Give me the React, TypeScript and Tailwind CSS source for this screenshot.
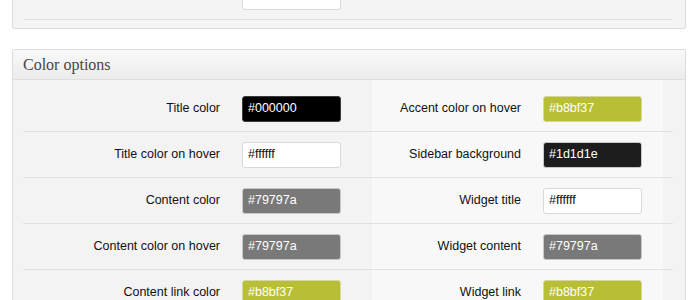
const rows: [string, string, string, string][] = [
  ["Title color", "#000000", "Accent color on hover", "#b8bf37"],
  ["Title color on hover", "#ffffff", "Sidebar background", "#1d1d1e"],
  ["Content color", "#79797a", "Widget title", "#ffffff"],
  ["Content color on hover", "#79797a", "Widget content", "#79797a"],
  ["Content link color", "#b8bf37", "Widget link", "#b8bf37"],
];

const swatch: Record<string, string> = {
  "#000000": "bg-[#000000] border-[#3a3a3a] text-white",
  "#ffffff": "bg-white border-[#d9d9d9] text-[#111]",
  "#79797a": "bg-[#79797a] border-[#c8c8c8] text-white",
  "#b8bf37": "bg-[#b8bf37] border-[#d4d89a] text-white",
  "#1d1d1e": "bg-[#1d1d1e] border-[#c8c8c8] text-white",
};

function ColorInput({ value }: { value: string }) {
  return (
    <div
      className={`flex h-[26px] w-[99px] items-center rounded-[3px] border pl-[5px] text-[12.5px] ${swatch[value]}`}
    >
      {value}
    </div>
  );
}

function Label({ children }: { children: string }) {
  return (
    <div className="flex items-center justify-end pr-[10px] text-[12.5px] text-[#111]">
      {children}
    </div>
  );
}

export default function App() {
  return (
    <div
      className="min-h-[300px] overflow-hidden bg-white pr-[12px] pl-[12px]"
      style={{ fontFamily: '"Liberation Sans", Arial, sans-serif' }}
    >
      {/* previous panel, scrolled mostly out of view */}
      <div className="-mt-[26px] rounded-b-[3px] border-x border-b border-[#dcdcdc] bg-[#f4f4f4] pr-[12px] pb-[8px] pl-[10px]">
        <div className="grid h-[46px] w-[650px] grid-cols-[207px_142px_159px_142px] border-b border-[#e1e1e1]">
          <Label>Base text color on hover</Label>
          <div className="flex items-center pl-[12px]">
            <ColorInput value="#ffffff" />
          </div>
        </div>
      </div>

      <div className="mt-[20px] overflow-hidden rounded-t-[3px] border-x border-t border-[#dcdcdc]">
        <div className="flex h-[30px] items-center border-b border-[#dfdfdf] bg-gradient-to-b from-[#f9f9f9] to-[#ececec] pl-[10px]">
          <h3
            className="pt-[1px] text-[16px] text-[#464646]"
            style={{ fontFamily: '"Liberation Serif", "Times New Roman", serif' }}
          >
            Color options
          </h3>
        </div>
        <div className="bg-[linear-gradient(to_right,#f3f3f3_359px,#f8f8f8_359px,#f8f8f8_650px,#f3f3f3_650px)] pt-[6px] pr-[12px] pl-[10px]">
          {rows.map(([l1, v1, l2, v2]) => (
            <div
              key={l1}
              className="grid h-[46px] w-[650px] grid-cols-[207px_142px_159px_142px] border-b border-[#e1e1e1]"
            >
              <Label>{l1}</Label>
              <div className="flex items-center pl-[12px]">
                <ColorInput value={v1} />
              </div>
              <Label>{l2}</Label>
              <div className="flex items-center pl-[12px]">
                <ColorInput value={v2} />
              </div>
            </div>
          ))}
        </div>
      </div>
    </div>
  );
}
